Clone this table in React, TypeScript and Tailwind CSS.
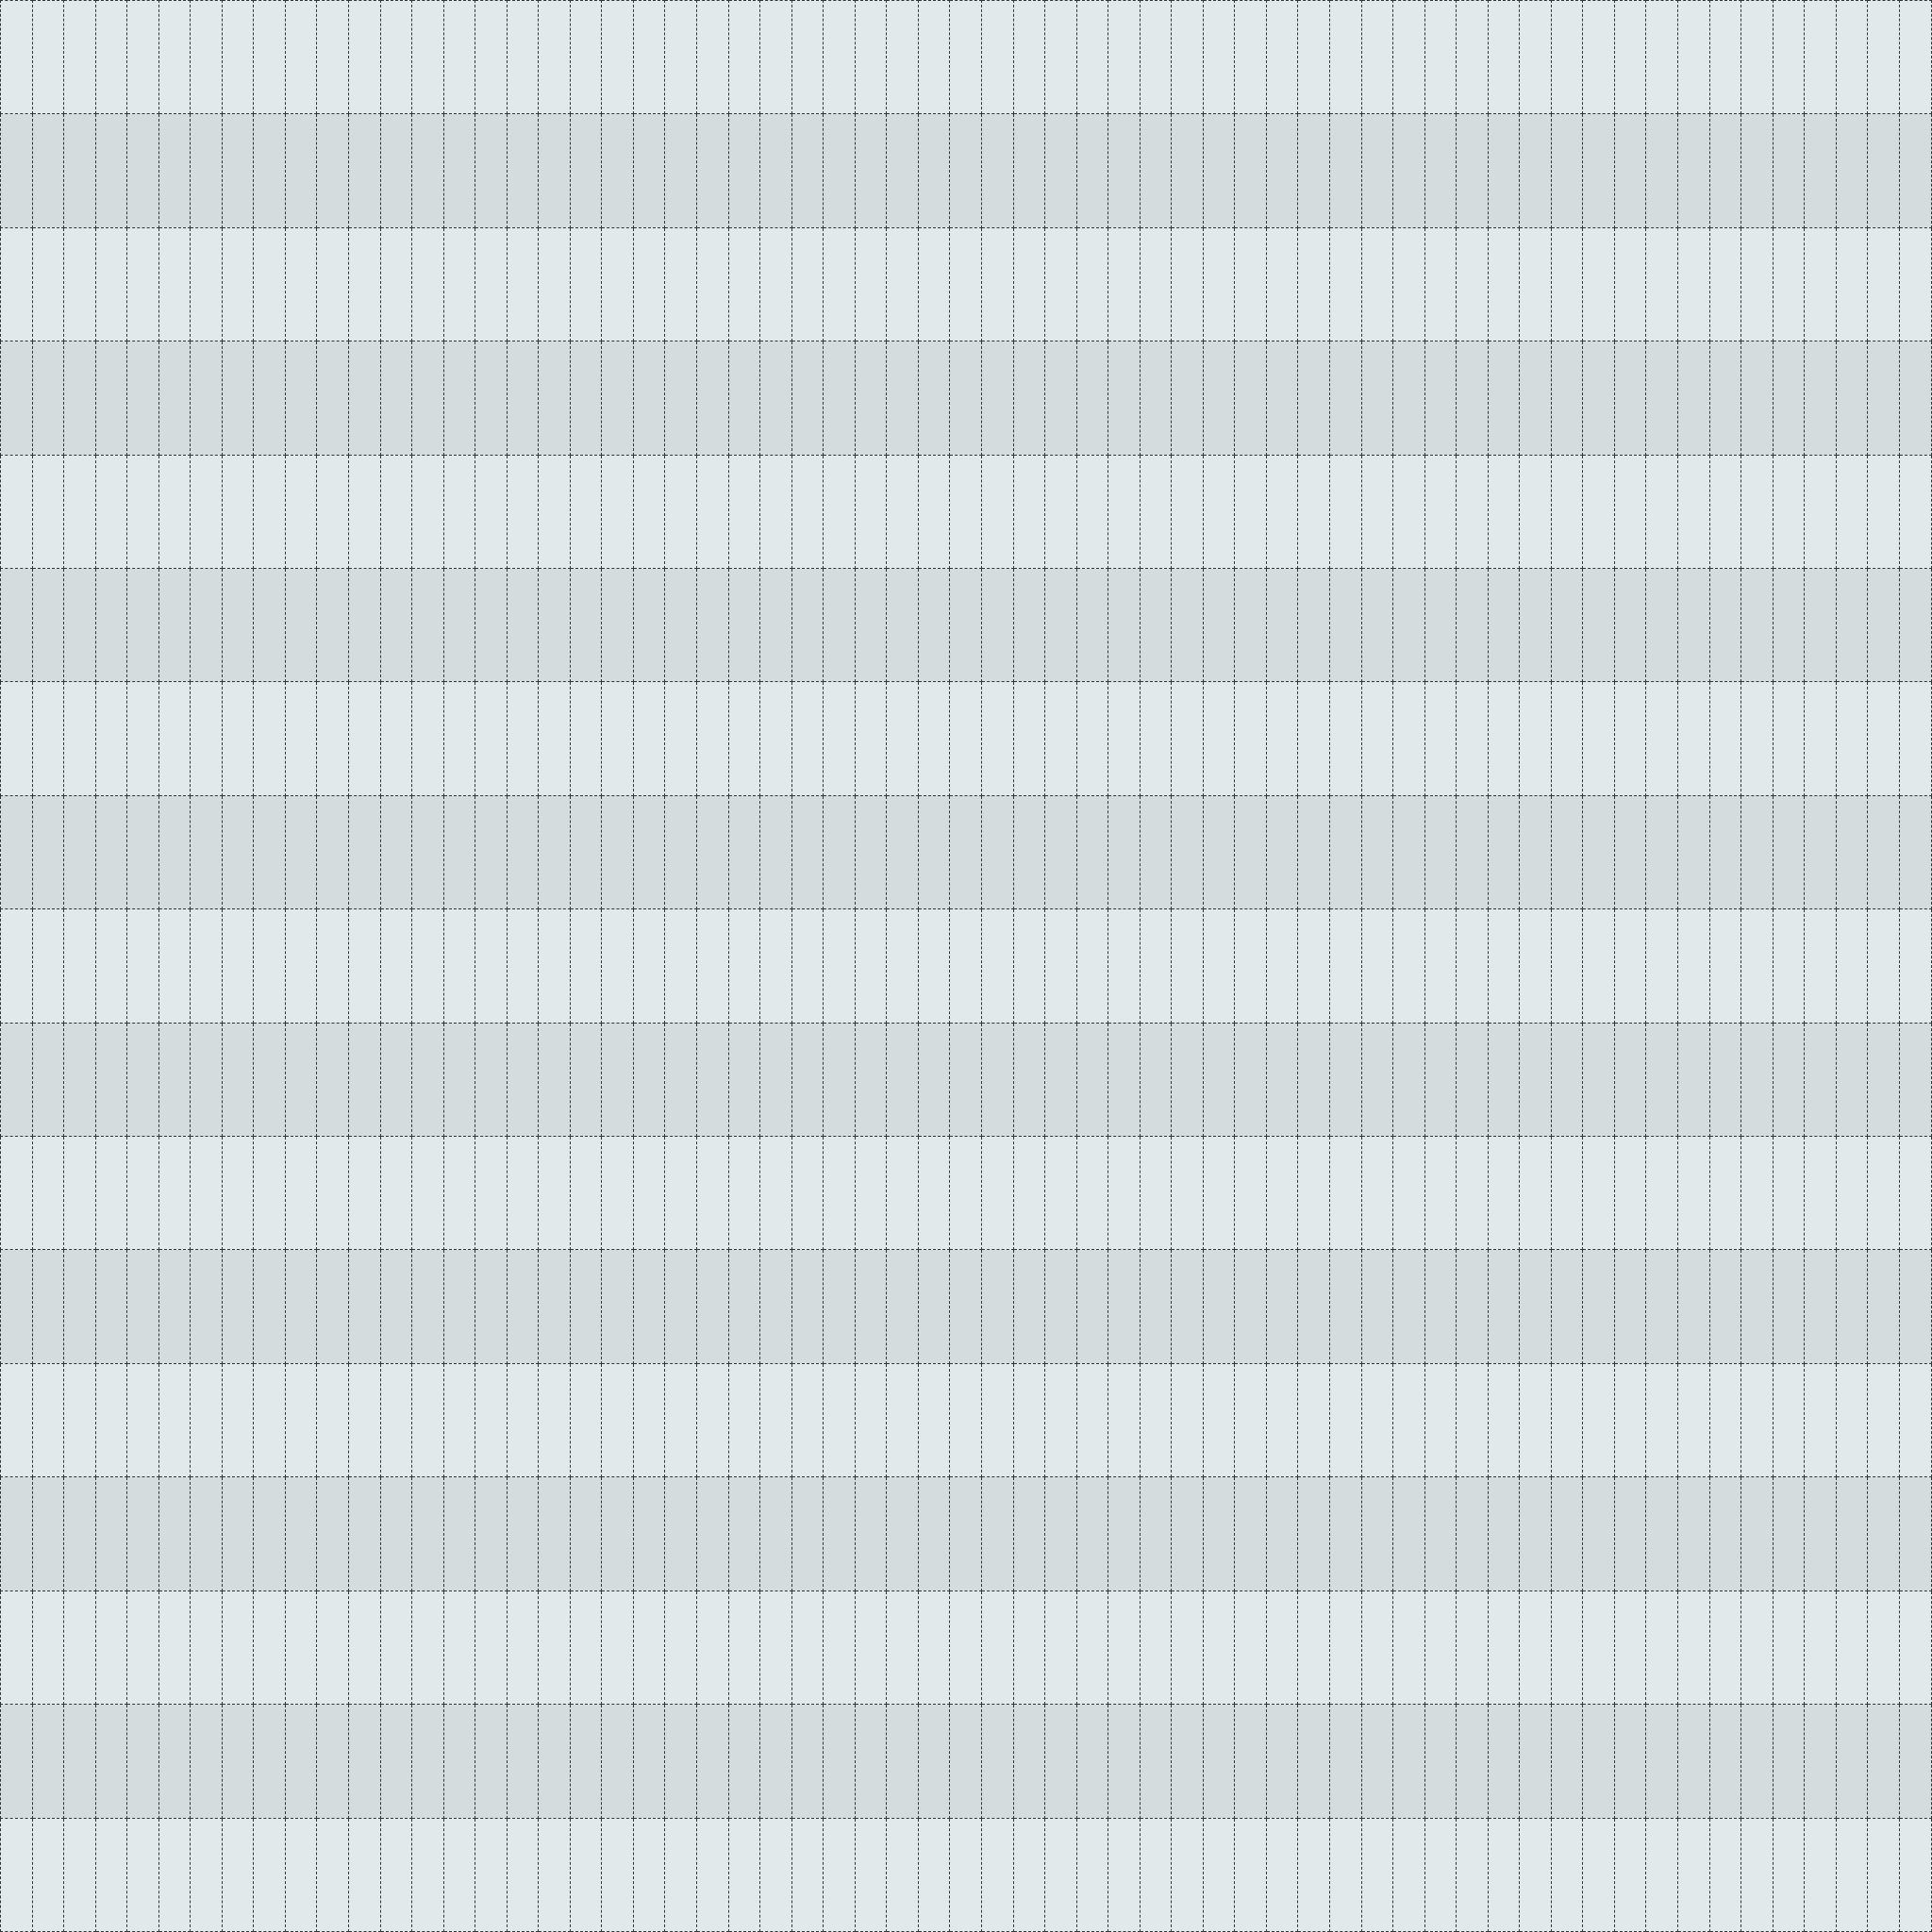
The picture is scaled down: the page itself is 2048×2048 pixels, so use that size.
const ROWS = 17;
const COLS = 61;

export default function App() {
  return (
    <div className="w-[2048px] h-[2048px] bg-[#e1e9ea]">
      <table className="w-full h-full border-collapse table-fixed">
        <tbody>
          {Array.from({ length: ROWS }).map((_, r) => (
            <tr key={r} className={r % 2 === 1 ? "bg-[#d5dcde]" : "bg-[#e1e9ea]"}>
              {Array.from({ length: COLS }).map((_, c) => (
                <td key={c} className="border border-dashed border-[#2f353b] p-0"></td>
              ))}
            </tr>
          ))}
        </tbody>
      </table>
    </div>
  );
}
